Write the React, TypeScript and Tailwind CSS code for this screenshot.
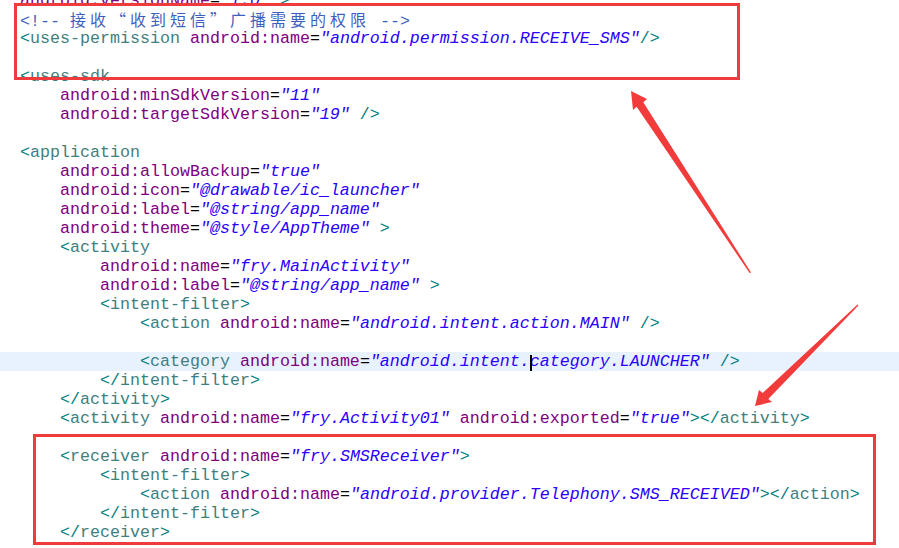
import React from "react";

type Tok = [string, string];

const cls: Record<string, string> = {
  d: "text-[#008080]",
  t: "text-[#3f7f7f]",
  a: "text-[#7f007f]",
  e: "text-black",
  v: "text-[#2a00ff] italic",
  c: "text-[#3f5fbf]",
  p: "text-black",
};

const sp = (n: number): Tok => ["p", " ".repeat(n)];

const lines: Tok[][] = [
  [["a", "android:versionName"], ["e", "="], ["v", '"1.0"'], ["p", " "], ["d", ">"]],
  [["c", "<!-- "], ["z", "接收“收到短信”广播需要的权限"], ["c", " -->"]],
  [["d", "<"], ["t", "uses-permission"], ["p", " "], ["a", "android:name"], ["e", "="], ["v", '"android.permission.RECEIVE_SMS"'], ["d", "/>"]],
  [],
  [["d", "<"], ["t", "uses-sdk"]],
  [sp(4), ["a", "android:minSdkVersion"], ["e", "="], ["v", '"11"']],
  [sp(4), ["a", "android:targetSdkVersion"], ["e", "="], ["v", '"19"'], ["p", " "], ["d", "/>"]],
  [],
  [["d", "<"], ["t", "application"]],
  [sp(4), ["a", "android:allowBackup"], ["e", "="], ["v", '"true"']],
  [sp(4), ["a", "android:icon"], ["e", "="], ["v", '"@drawable/ic_launcher"']],
  [sp(4), ["a", "android:label"], ["e", "="], ["v", '"@string/app_name"']],
  [sp(4), ["a", "android:theme"], ["e", "="], ["v", '"@style/AppTheme"'], ["p", " "], ["d", ">"]],
  [sp(4), ["d", "<"], ["t", "activity"]],
  [sp(8), ["a", "android:name"], ["e", "="], ["v", '"fry.MainActivity"']],
  [sp(8), ["a", "android:label"], ["e", "="], ["v", '"@string/app_name"'], ["p", " "], ["d", ">"]],
  [sp(8), ["d", "<"], ["t", "intent-filter"], ["d", ">"]],
  [sp(12), ["d", "<"], ["t", "action"], ["p", " "], ["a", "android:name"], ["e", "="], ["v", '"android.intent.action.MAIN"'], ["p", " "], ["d", "/>"]],
  [],
  [sp(12), ["d", "<"], ["t", "category"], ["p", " "], ["a", "android:name"], ["e", "="], ["v", '"android.intent.'], ["k", ""], ["v", 'category.LAUNCHER"'], ["p", " "], ["d", "/>"]],
  [sp(8), ["d", "</"], ["t", "intent-filter"], ["d", ">"]],
  [sp(4), ["d", "</"], ["t", "activity"], ["d", ">"]],
  [sp(4), ["d", "<"], ["t", "activity"], ["p", " "], ["a", "android:name"], ["e", "="], ["v", '"fry.Activity01"'], ["p", " "], ["a", "android:exported"], ["e", "="], ["v", '"true"'], ["d", "></"], ["t", "activity"], ["d", ">"]],
  [],
  [sp(4), ["d", "<"], ["t", "receiver"], ["p", " "], ["a", "android:name"], ["e", "="], ["v", '"fry.SMSReceiver"'], ["d", ">"]],
  [sp(8), ["d", "<"], ["t", "intent-filter"], ["d", ">"]],
  [sp(12), ["d", "<"], ["t", "action"], ["p", " "], ["a", "android:name"], ["e", "="], ["v", '"android.provider.Telephony.SMS_RECEIVED"'], ["d", "></"], ["t", "action"], ["d", ">"]],
  [sp(8), ["d", "</"], ["t", "intent-filter"], ["d", ">"]],
  [sp(4), ["d", "</"], ["t", "receiver"], ["d", ">"]],
];

function Token({ tok }: { tok: Tok }) {
  const [type, text] = tok;
  if (type === "k") {
    return (
      <span className="relative">
        <span className="absolute left-[0px] top-[3px] w-[2px] h-[16px] bg-black" />
      </span>
    );
  }
  if (type === "z") {
    return (
      <span className="text-[#3f5fbf]">
        {Array.from(text).map((ch, i) => (
          <span
            key={i}
            className="inline-block w-[20px] font-['Noto_Sans_CJK_SC',sans-serif] text-[16px]"
          >
            {ch}
          </span>
        ))}
      </span>
    );
  }
  return <span className={cls[type]}>{text}</span>;
}

export default function App() {
  return (
    <div className="relative w-[899px] h-[548px] overflow-hidden bg-white">
      <div className="-mt-[9px] flex flex-col font-['Liberation_Mono',monospace] text-[16.66px] leading-[19px]">
        {lines.map((ln, i) => (
          <div
            key={i}
            className={
              i === 19
                ? "h-[19px] pl-[20px] whitespace-pre bg-[#e8f2fe]"
                : "h-[19px] pl-[20px] whitespace-pre"
            }
          >
            {ln.map((t, j) => (
              <Token key={j} tok={t} />
            ))}
          </div>
        ))}
      </div>

      {/* annotation boxes */}
      <div className="absolute left-[14px] top-[3px] w-[726px] h-[77px] border-[3px] border-[#ef3b3b]" />
      <div className="absolute left-[33px] top-[434px] w-[843px] h-[111px] border-[3px] border-[#ef3b3b]" />

      {/* annotation arrows */}
      <svg className="absolute left-0 top-0" width="899" height="548" viewBox="0 0 899 548">
        <polygon
          fill="#f23c3c"
          points="631,91 647,99 643.3,102.3 751,272.5 749.6,273 636.6,106.7 633,110"
        />
        <polygon
          fill="#f23c3c"
          points="755,406 759,390 762.7,393.1 857.5,304.6 858.4,305.4 768.3,398.9 772,402"
        />
      </svg>
    </div>
  );
}
